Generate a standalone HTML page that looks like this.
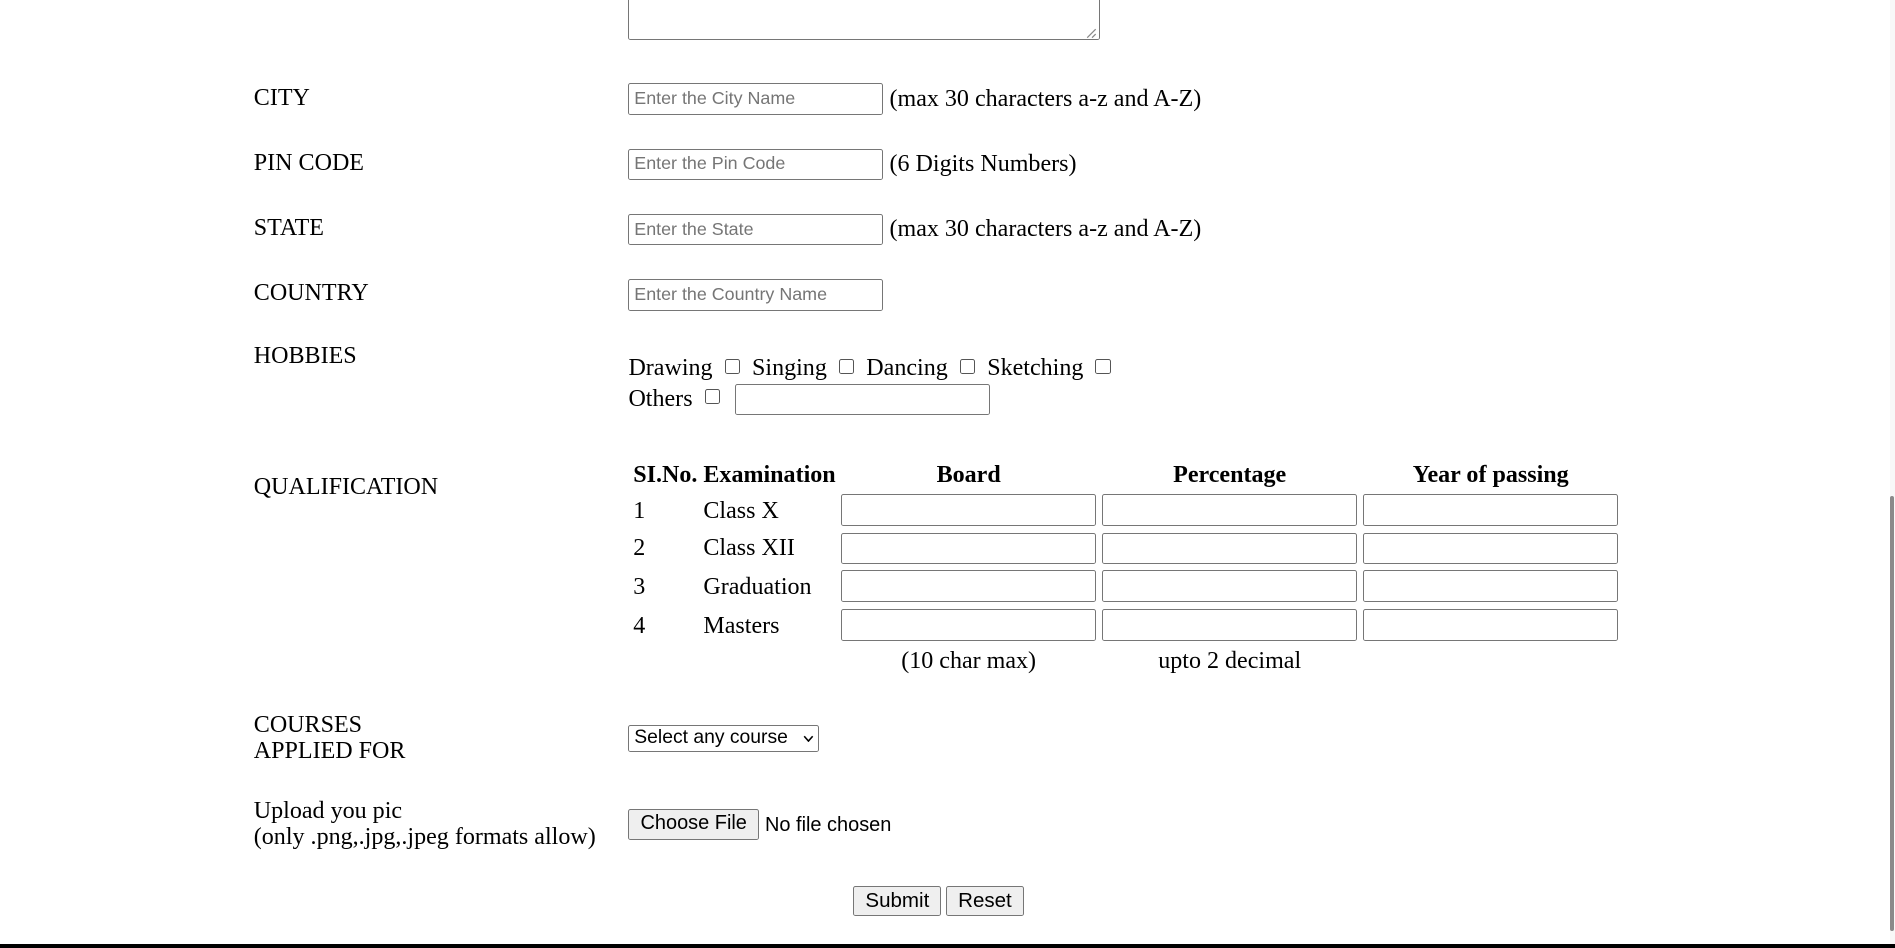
<!DOCTYPE html>
<html><head><meta charset="utf-8"><style>
html,body{margin:0;padding:0;background:#fff;overflow:hidden}
#w{position:relative;width:1568px;height:784px;zoom:1.20855;font-family:"Liberation Serif","Times New Roman",serif;font-size:19.9px;color:#000}
.a{position:absolute;white-space:nowrap;line-height:22px;font-family:"Liberation Serif",serif}
.in{position:absolute;box-sizing:border-box;border:1px solid #767676;border-radius:2px;background:#fff;height:26px;width:211px;font-family:"Liberation Sans",sans-serif;font-size:14.8px;color:#757575;padding:3px 4px;line-height:18px;white-space:nowrap}
.cb{display:inline-block;width:11px;height:11px;border:1px solid #555;border-radius:2px;vertical-align:1px;margin:0 10px 0 10px}
.btn{position:absolute;box-sizing:border-box;border:1px solid #767676;border-radius:2px;background:#efefef;font-family:"Liberation Sans",sans-serif;font-size:16.5px;color:#000;text-align:center;line-height:23px}
b{font-weight:bold}
</style></head><body><div id="w">
<div style="position:absolute;left:520px;top:-10px;width:390px;height:43px;box-sizing:border-box;border:1px solid #767676;border-radius:2px"></div>
<svg style="position:absolute;left:899px;top:23px" width="9" height="9"><path d="M8 1L1 8M8 5L5 8" stroke="#888" stroke-width="1"/></svg>

<div class="a" style="left:210px;top:70px">CITY</div>
<div class="in" style="left:520px;top:69px">Enter the City Name</div>
<div class="a" style="left:736px;top:71px">(max 30 characters a-z and A-Z)</div>

<div class="a" style="left:210px;top:124px">PIN CODE</div>
<div class="in" style="left:520px;top:123px">Enter the Pin Code</div>
<div class="a" style="left:736px;top:125px">(6 Digits Numbers)</div>

<div class="a" style="left:210px;top:178px">STATE</div>
<div class="in" style="left:520px;top:177px">Enter the State</div>
<div class="a" style="left:736px;top:179px">(max 30 characters a-z and A-Z)</div>

<div class="a" style="left:210px;top:232px">COUNTRY</div>
<div class="in" style="left:520px;top:231px">Enter the Country Name</div>

<div class="a" style="left:210px;top:284px">HOBBIES</div>
<div class="a" style="left:520px;top:294px">Drawing<span class="cb"></span>Singing<span class="cb"></span>Dancing<span class="cb"></span>Sketching<span class="cb"></span></div>
<div class="a" style="left:520px;top:319px">Others<span class="cb"></span></div>
<div class="in" style="left:608px;top:318px;height:25px"></div>

<div class="a" style="left:210px;top:392px">QUALIFICATION</div>
<div class="a" style="left:524px;top:382px"><b>SI.No.</b></div>
<div class="a" style="left:582px;top:382px"><b>Examination</b></div>
<div class="a" style="left:696px;top:382px;width:211px;text-align:center"><b>Board</b></div>
<div class="a" style="left:912px;top:382px;width:211px;text-align:center"><b>Percentage</b></div>
<div class="a" style="left:1128px;top:382px;width:211px;text-align:center"><b>Year of passing</b></div>

<div class="a" style="left:524px;top:412px">1</div><div class="a" style="left:582px;top:412px">Class X</div>
<div class="a" style="left:524px;top:443px">2</div><div class="a" style="left:582px;top:443px">Class XII</div>
<div class="a" style="left:524px;top:475px">3</div><div class="a" style="left:582px;top:475px">Graduation</div>
<div class="a" style="left:524px;top:507px">4</div><div class="a" style="left:582px;top:507px">Masters</div>

<div class="in" style="left:696px;top:409px"></div><div class="in" style="left:912px;top:409px"></div><div class="in" style="left:1128px;top:409px"></div>
<div class="in" style="left:696px;top:441px"></div><div class="in" style="left:912px;top:441px"></div><div class="in" style="left:1128px;top:441px"></div>
<div class="in" style="left:696px;top:472px"></div><div class="in" style="left:912px;top:472px"></div><div class="in" style="left:1128px;top:472px"></div>
<div class="in" style="left:696px;top:504px"></div><div class="in" style="left:912px;top:504px"></div><div class="in" style="left:1128px;top:504px"></div>

<div class="a" style="left:696px;top:536px;width:211px;text-align:center">(10 char max)</div>
<div class="a" style="left:912px;top:536px;width:211px;text-align:center">upto 2 decimal</div>

<div class="a" style="left:210px;top:589px">COURSES</div>
<div class="a" style="left:210px;top:611px">APPLIED FOR</div>
<div style="position:absolute;left:520px;top:600px;width:158px;height:22px;box-sizing:border-box;border:1px solid #767676;border-radius:2px;font-family:'Liberation Sans',sans-serif;font-size:16px;line-height:20px;padding-left:4px;white-space:nowrap">Select any course<svg style="position:absolute;right:4px;top:7px" width="9" height="6"><path d="M1 1L4.5 5L8 1" stroke="#000" stroke-width="1.3" fill="none"/></svg></div>

<div class="a" style="left:210px;top:660px">Upload you pic</div>
<div class="a" style="left:210px;top:682px">(only .png,.jpg,.jpeg formats allow)</div>
<div class="btn" style="left:520px;top:669px;width:108px;height:26px">Choose File</div>
<div class="a" style="left:633px;top:672px;font-family:'Liberation Sans',sans-serif;font-size:16.5px">No file chosen</div>

<div class="btn" style="left:706px;top:733px;width:73px;height:25px;font-size:17px">Submit</div>
<div class="btn" style="left:783px;top:733px;width:64px;height:25px;font-size:17px">Reset</div>

<div style="position:absolute;left:0;top:781px;width:1568px;height:3px;background:#000"></div>
<div style="position:absolute;left:1564px;top:0;width:4px;height:781px;background:#f8f8f8"></div>
<div style="position:absolute;left:1564px;top:410px;width:3px;height:360px;background:#8a8a8a;border-radius:2px"></div>
</div></body></html>
